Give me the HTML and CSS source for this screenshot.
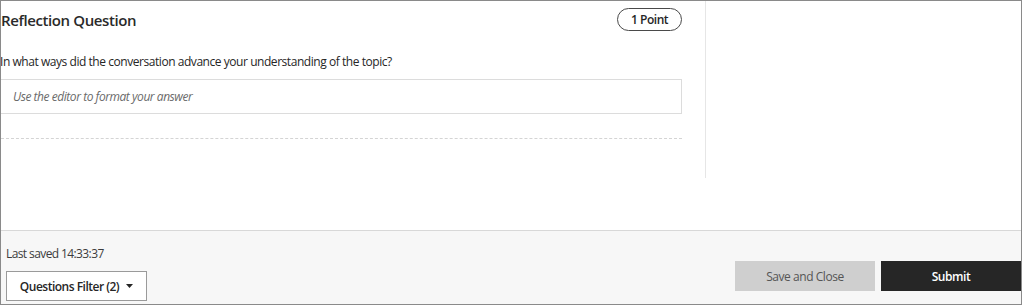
FILE: index.html
```html
<!DOCTYPE html>
<html lang="en">
<head>
<meta charset="utf-8">
<title>Reflection Question</title>
<link rel="stylesheet" href="styles.css">
</head>
<body>
<div class="frame">
  <div class="content">
    <div class="main">
      <div class="head-row">
        <h2 class="title">Reflection Question</h2>
        <span class="points">1 Point</span>
      </div>
      <p class="question">In what ways did the conversation advance your understanding of the topic?</p>
      <div class="editor">Use the editor to format your answer</div>
      <div class="divider"></div>
    </div>
    <div class="side"></div>
  </div>
  <div class="footer">
    <div class="footer-left">
      <div class="saved">Last saved 14:33:37</div>
      <button class="filter">Questions Filter (2)<svg class="caret" width="7" height="4" viewBox="0 0 7 4"><path d="M0 0H7L3.5 4Z" fill="#262626"/></svg></button>
    </div>
    <div class="footer-right">
      <button class="btn save">Save and Close</button>
      <button class="btn submit">Submit</button>
    </div>
  </div>
</div>
</body>
</html>
```

FILE: styles.css
```css
* { box-sizing: border-box; }
html, body { margin: 0; padding: 0; background: #fff; }
body {
  font-family: "Open Sans", "Liberation Sans", sans-serif;
  color: #262626;
  letter-spacing: -0.45px;
}

.frame {
  width: 1022px;
  height: 305px;
  border: 1px solid #8a8a8a;
  display: flex;
  flex-direction: column;
  overflow: hidden;
}

.content {
  height: 229px;
  display: flex;
  align-items: flex-start;
}

.main {
  width: 681px;
  flex: none;
}

.head-row {
  display: flex;
  align-items: center;
  justify-content: space-between;
  padding-top: 7px;
  height: 30px;
}

.title {
  margin: 0;
  font-size: 15px;
  font-weight: 600;
  line-height: 20px;
  color: #2a2a2a;
  letter-spacing: -0.4px;
}

.points {
  display: inline-flex;
  align-items: center;
  justify-content: center;
  width: 65px;
  height: 23px;
  border: 1px solid #4a4a4a;
  border-radius: 12px;
  font-size: 12px;
  font-weight: 600;
  color: #262626;
}

.question {
  margin: 23px 0 0 -1px;
  font-size: 12px;
  line-height: 16px;
  color: #262626;
}

.editor {
  margin-top: 9px;
  height: 35px;
  border: 1px solid #dcdcdc;
  border-left: none;
  padding: 0 12px;
  display: flex;
  align-items: center;
  font-size: 12px;
  font-style: italic;
  color: #6a6a6a;
}

.divider {
  margin-top: 24px;
  border-top: 1px dashed #d4d4d4;
}

.side {
  margin-left: 23px;
  width: 1px;
  height: 177px;
  background: #e6e6e6;
}

.footer {
  flex: 1;
  border-top: 1px solid #d8d8d8;
  background: #f7f7f7;
  display: flex;
  justify-content: space-between;
  align-items: flex-end;
  padding: 0 0 3px 5px;
}

.footer-left {
  display: flex;
  flex-direction: column;
  align-items: flex-start;
}

.saved {
  font-size: 12px;
  line-height: 16px;
  color: #3c3c3c;
  margin-bottom: 9px;
  letter-spacing: -0.6px;
}

.filter {
  width: 141px;
  height: 30px;
  background: #fff;
  border: 1px solid #9a9a9a;
  border-radius: 0;
  font-family: inherit;
  font-size: 12px;
  font-weight: 600;
  letter-spacing: -0.5px;
  color: #262626;
  display: flex;
  align-items: center;
  justify-content: center;
  gap: 7px;
  padding: 0;
}

.caret { display: block; }

.footer-right {
  display: flex;
  gap: 6px;
  margin-bottom: 10px;
}

.btn {
  width: 140px;
  height: 30px;
  border: none;
  border-radius: 0;
  font-family: inherit;
  font-size: 12px;
  letter-spacing: -0.45px;
  padding: 0;
}

.save {
  background: #cfcfcf;
  color: #555;
}

.submit {
  background: #262626;
  color: #fff;
  font-weight: 600;
}
```
